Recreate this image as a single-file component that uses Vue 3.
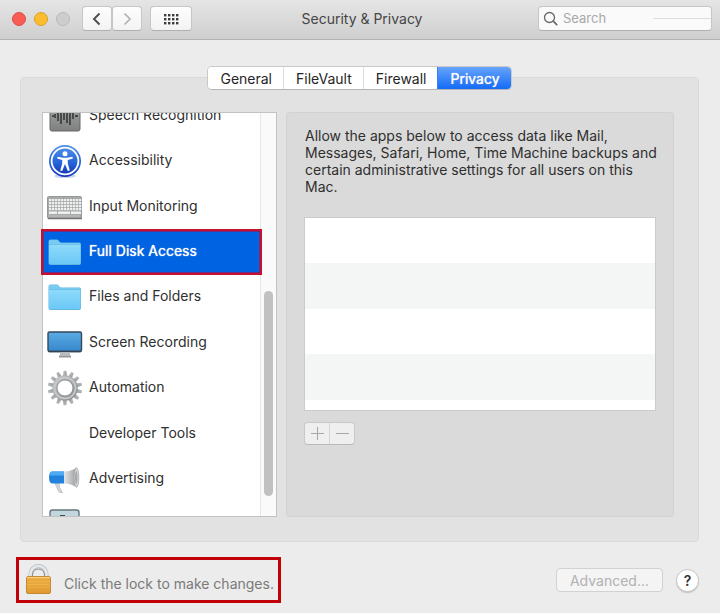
<script setup>
import { ref } from 'vue'

const tabs = ['General', 'FileVault', 'Firewall', 'Privacy']
const activeTab = ref('Privacy')

const categories = [
  { name: 'Speech Recognition', icon: 'speech' },
  { name: 'Accessibility', icon: 'accessibility' },
  { name: 'Input Monitoring', icon: 'keyboard' },
  { name: 'Full Disk Access', icon: 'folder' },
  { name: 'Files and Folders', icon: 'folder' },
  { name: 'Screen Recording', icon: 'screen' },
  { name: 'Automation', icon: 'gear' },
  { name: 'Developer Tools', icon: '' },
  { name: 'Advertising', icon: 'megaphone' },
  { name: '', icon: 'chart' },
]
const selected = ref('Full Disk Access')
const search = ref('')

const teeth = Array.from({ length: 14 }, (_, i) => (i * 360) / 14)
const keyRows = [9, 12, 15, 18]
const keyCols = Array.from({ length: 11 }, (_, i) => 2 + i * 3)
const dots = [0, 1, 2].flatMap((r) => [0, 1, 2, 3].map((c) => ({ x: 1 + c * 4, y: 1 + r * 4 })))
</script>

<template>
  <div class="window">
    <header class="titlebar">
      <div class="tools">
        <div class="lights">
          <button class="light red" aria-label="Close"></button>
          <button class="light yellow" aria-label="Minimize"></button>
          <button class="light off" aria-label="Zoom" disabled></button>
        </div>
        <div class="nav">
          <button class="tool" aria-label="Back">
            <svg width="10" height="14" viewBox="0 0 10 14"><path d="M7.500 1.500 2 7l5.500 5.500" fill="none" stroke="#4c4c4c" stroke-width="1.900" /></svg>
          </button>
          <button class="tool" aria-label="Forward" disabled>
            <svg width="10" height="14" viewBox="0 0 10 14"><path d="M2.500 1.500 8 7l-5.500 5.500" fill="none" stroke="#b2b2b2" stroke-width="1.700" /></svg>
          </button>
        </div>
        <button class="tool wide" aria-label="Show All">
          <svg width="16" height="12" viewBox="0 0 16 12">
            <rect v-for="(d, i) in dots" :key="i" :x="d.x" :y="d.y" width="2.400" height="2.400" fill="#3c3c3c" />
          </svg>
        </button>
      </div>
      <h1 class="title">Security &amp; Privacy</h1>
      <label class="search">
        <svg width="16" height="16" viewBox="0 0 16 16"><circle cx="6.500" cy="6.500" r="5" fill="none" stroke="#686868" stroke-width="1.300" /><path d="m10.200 10.200 4 4" stroke="#686868" stroke-width="1.700" /></svg>
        <input v-model="search" type="text" placeholder="Search" aria-label="Search" />
        <span class="rule"></span>
      </label>
    </header>

    <main class="body">
      <div class="tabs" role="tablist">
        <button
          v-for="tab in tabs"
          :key="tab"
          class="tab"
          :class="{ active: tab === activeTab }"
          role="tab"
          :aria-selected="tab === activeTab"
          @click="activeTab = tab"
        >{{ tab }}</button>
      </div>

      <section class="panel">
        <div class="sidebar">
          <div class="viewport">
            <ul class="list">
              <li v-for="item in categories" :key="item.name" class="entry">
                <button class="row" :class="{ selected: item.name === selected }" :aria-label="item.name || 'Analytics'" @click="selected = item.name">
                  <svg class="icon" width="36" height="36" viewBox="0 0 36 36" aria-hidden="true">
                    <defs>
                      <linearGradient id="metal" x1="0" y1="0" x2="0" y2="1"><stop offset="0" stop-color="#a9abab" /><stop offset="1" stop-color="#7e807f" /></linearGradient>
                      <linearGradient id="blue" x1="0" y1="0" x2="0" y2="1"><stop offset="0" stop-color="#4c8fe8" /><stop offset="0.600" stop-color="#2461d8" /><stop offset="1" stop-color="#1736b8" /></linearGradient>
                      <linearGradient id="sky" x1="0" y1="0" x2="0" y2="1"><stop offset="0" stop-color="#8edafb" /><stop offset="1" stop-color="#6bc8f6" /></linearGradient>
                      <linearGradient id="monitor" x1="0" y1="0" x2="0" y2="1"><stop offset="0" stop-color="#5cabe4" /><stop offset="1" stop-color="#3687cd" /></linearGradient>
                      <linearGradient id="steel" x1="0" y1="0" x2="1" y2="1"><stop offset="0" stop-color="#c0c3c5" /><stop offset="0.500" stop-color="#a8abad" /><stop offset="1" stop-color="#8c8e90" /></linearGradient>
                      <linearGradient id="horn" x1="0" y1="0" x2="1" y2="0"><stop offset="0" stop-color="#e3e5e6" /><stop offset="0.600" stop-color="#b8babc" /><stop offset="1" stop-color="#949597" /></linearGradient>
                    </defs>
                    <g v-if="item.icon === 'speech'">
                      <rect x="3" y="3" width="30" height="30" rx="2" fill="url(#metal)" stroke="#646665" />
                      <path d="M5 18h2m22 0h2M8 16v4m3-7v10m3-13v16m3-12v8m3-11v14m3-16v18m3-12v6m3-4v2" stroke="#303332" stroke-width="1.500" />
                    </g>
                    <g v-else-if="item.icon === 'accessibility'">
                      <ellipse cx="18" cy="33" rx="11" ry="2" fill="#a9b9e8" opacity="0.600" />
                      <circle cx="18" cy="18" r="16" fill="url(#blue)" />
                      <circle cx="18" cy="18" r="13.400" fill="url(#blue)" stroke="#fff" stroke-width="1.800" />
                      <circle cx="18" cy="10.800" r="2.500" fill="#fff" />
                      <path d="m10.500 13.800 5.500 1h4l5.500-1 .3 1.700-5 1.400v3.500l2 7-2 .6-2.800-7-2.800 7-2-.6 2-7v-3.500l-5-1.400z" fill="#fff" />
                    </g>
                    <g v-else-if="item.icon === 'keyboard'">
                      <rect x="0.500" y="7.500" width="34" height="22" rx="1" fill="#a8aaaa" stroke="#969898" />
                      <path d="M1 29.500h34" stroke="#747676" stroke-width="1.500" />
                      <template v-for="y in keyRows" :key="y">
                        <rect v-for="x in keyCols" :key="x" :x="x" :y="y + 1" width="2.300" height="2.200" fill="#eeefef" />
                      </template>
                      <path d="M2 23.800h8m1 0h12m1 0h10" stroke="#eeefef" stroke-width="2.400" />
                      <path d="M2 27h31" stroke="#c3c5c5" />
                    </g>
                    <g v-else-if="item.icon === 'folder'">
                      <path d="M1.500 7.500q0-2 2-2h7l3 3h19q1.500 0 1.500 1.500v19q0 2-2 2H3.500q-2 0-2-2z" fill="#62b5df" />
                      <path d="M2 7.500q0-1.500 1.500-1.500h7l3 3h18.500q1.500 0 1.500 1.500H2z" fill="#79cbef" />
                      <path d="M2 11h31.500v17.500q0 1.500-1.500 1.500H3.500q-1.500 0-1.500-1.500z" fill="url(#sky)" />
                    </g>
                    <g v-else-if="item.icon === 'screen'">
                      <rect x="1" y="7" width="33.500" height="19.500" rx="1.500" fill="url(#monitor)" stroke="#34495b" stroke-width="1.400" />
                      <path d="M1.500 26.500h32.500" stroke="#344351" stroke-width="1.400" />
                      <path d="M13 27.200h10v3.300H13z" fill="#b9bcbe" />
                      <path d="M12 31.500h12" stroke="#94979a" stroke-width="2" />
                    </g>
                    <g v-else-if="item.icon === 'gear'">
                      <path v-for="a in teeth" :key="a" d="M15.800 7.500 16.600 0.800h2.800l.8 6.700z" fill="url(#steel)" :transform="`rotate(${a} 18 18)`" />
                      <circle cx="18" cy="18" r="10.200" fill="none" stroke="url(#steel)" stroke-width="5" />
                      <circle cx="18" cy="18" r="8" fill="none" stroke="#8e9193" stroke-width="0.800" />
                      <circle cx="18" cy="18" r="10.500" fill="none" stroke="#c9cccd" stroke-width="1.500" />
                    </g>
                    <g v-else-if="item.icon === 'megaphone'">
                      <path d="m8 22 3 7.500q1 3 4.500 2l-3-5-.5-4.500z" fill="#d5d7d9" stroke="#b5b7b9" stroke-width="0.700" />
                      <path d="M5 10.500h12v12H5Q2 22 2 16.500t3-6z" fill="#2383dc" />
                      <path d="M5 10.500h12v4H2.300q.4-3.500 2.700-4z" fill="#50aaf1" />
                      <path d="M17 10.500q7 0 13-4v20q-6-4-13-4z" fill="url(#horn)" />
                      <ellipse cx="29.500" cy="16.500" rx="2.300" ry="9.700" fill="#d8dadb" stroke="#a5a6a8" stroke-width="0.800" />
                      <ellipse cx="29.300" cy="16.500" rx="1.200" ry="6.500" fill="#a5a6a8" />
                    </g>
                    <g v-else-if="item.icon === 'chart'">
                      <rect x="3" y="4" width="29" height="29" rx="2.500" fill="#c2d6df" stroke="#68747b" stroke-width="1.400" />
                      <path d="M13 9.800h5" stroke="#3c454b" stroke-width="1.500" />
                    </g>
                  </svg>
                  <span>{{ item.name }}</span>
                </button>
              </li>
            </ul>
          </div>
          <div class="track"><div class="thumb"></div></div>
          <div class="marker"></div>
        </div>

        <div class="detail">
          <p class="hint">Allow the apps below to access data like Mail, Messages, Safari, Home, Time Machine backups and certain administrative settings for all users on this Mac.</p>
          <div class="apps"></div>
          <div class="stepper">
            <button aria-label="Add" disabled><svg width="13" height="13" viewBox="0 0 13 13"><path d="M0 6.500h13M6.500 0v13" stroke="#a7a7a7" /></svg></button>
            <button aria-label="Remove" disabled><svg width="13" height="13" viewBox="0 0 13 13"><path d="M0 6.500h13" stroke="#a7a7a7" /></svg></button>
          </div>
        </div>
      </section>

      <footer class="footer">
        <button class="lock">
          <svg width="28" height="32" viewBox="0 0 28 32" aria-hidden="true">
            <defs>
              <linearGradient id="gold" x1="0" y1="0" x2="0" y2="1"><stop offset="0" stop-color="#efb040" /><stop offset="0.500" stop-color="#f3b247" /><stop offset="1" stop-color="#e0952b" /></linearGradient>
            </defs>
            <path d="M5.500 13V10a8 8 0 0 1 16 0V13" fill="none" stroke="#b4b8bb" stroke-width="4" />
            <path d="M5.500 13V10a8 8 0 0 1 16 0V13" fill="none" stroke="#e6e9eb" stroke-width="2.600" />
            <path d="M7.600 13V10a6 6 0 0 1 11.800 0V13" fill="none" stroke="#85898c" stroke-width="1" />
            <rect x="1.500" y="12.500" width="24" height="17" rx="1.500" fill="url(#gold)" stroke="#c58a34" />
            <path d="M2 16h23M2 19h23M2 22h23M2 25h23" stroke="#d79a38" stroke-width="0.800" />
            <path d="M2 13.500h23" stroke="#f8d081" />
          </svg>
          <span>Click the lock to make changes.</span>
        </button>
        <div class="actions">
          <button class="advanced" disabled>Advanced...</button>
          <button class="help" aria-label="Help">?</button>
        </div>
      </footer>
    </main>
  </div>
</template>

<style>
body {
  background: #ececec;
}
</style>

<style scoped>
.window {
  display: flex;
  flex-direction: column;
  min-height: 100vh;
  background: #ececec;
  color: #2f2f2f;
  font: 14px/17px Inter, "Liberation Sans", sans-serif;
}
.window *,
.window {
  box-sizing: border-box;
}
button,
input {
  margin: 0;
  padding: 0;
  border: 0;
  font: inherit;
  color: inherit;
}
.titlebar {
  display: grid;
  grid-template-columns: 1fr auto 1fr;
  align-items: center;
  height: 40px;
  padding: 0 8px 2px 12px;
  background: linear-gradient(#e5e5e5, #cfcfcf);
  border-bottom: 1px solid #b2b2b2;
}
.tools,
.lights,
.nav {
  display: flex;
  align-items: center;
}
.lights {
  gap: 8px;
  margin-right: 12px;
}
.light {
  width: 14px;
  height: 14px;
  border: 1px solid #df4a43;
  border-radius: 50%;
  background: #f95c54;
}
.light.yellow {
  border-color: #dfa023;
  background: #fbbd2e;
}
.light.off {
  border-color: #b9b9bb;
  background: #cdcdcf;
}
.nav {
  margin-right: 8px;
}
.tool {
  display: flex;
  align-items: center;
  justify-content: center;
  width: 30px;
  height: 25px;
  border: 1px solid #c6c6c6;
  border-bottom-color: #b0b0b0;
  border-radius: 4px;
  background: linear-gradient(#fdfdfd, #f3f3f3);
}
.tool.wide {
  width: 42px;
}
.title {
  margin: 0;
  font-size: 14px;
  font-weight: 400;
  color: #454545;
}
.search {
  display: flex;
  align-items: center;
  justify-self: end;
  gap: 4px;
  width: 174px;
  height: 25px;
  padding-left: 4px;
  border: 1px solid #c6c6c6;
  border-bottom-color: #b0b0b0;
  border-radius: 4px;
  background: #fafafa;
}
.search input {
  flex: 1;
  min-width: 0;
  background: transparent;
  outline: 0;
  font-size: 13px;
}
.search input::placeholder {
  color: #a8a8a8;
  opacity: 1;
}
.rule {
  width: 58px;
  height: 1px;
  background: #dedede;
}
.body {
  display: flex;
  flex: 1;
  flex-direction: column;
  padding: 26px 21px 10px 20px;
}
.tabs {
  position: relative;
  display: flex;
  align-self: center;
  margin-bottom: -13px;
  border: 1px solid #c9c9c9;
  border-bottom-color: #b5b5b5;
  border-radius: 5px;
  background: #fff;
  overflow: hidden;
}
.tab {
  height: 22px;
  padding: 0 11px 0 12px;
  background: #fff;
  color: #262626;
}
.tab + .tab {
  border-left: 1px solid #dedede;
}
.tab.active {
  border-color: #347ff6;
  background: linear-gradient(#66a3fb, #146bf6);
  color: #fff;
  text-shadow: 0 0 1px #fff;
}
.panel {
  display: grid;
  flex: 1;
  grid-template-columns: 235px 1fr;
  gap: 9px;
  padding: 34px 24px 24px 21px;
  border: 1px solid #dadada;
  border-radius: 4px;
  background: #e2e2e2;
}
.sidebar {
  position: relative;
  display: flex;
  height: 405px;
  border: 1px solid #c2c2c2;
  background: #fff;
}
.viewport {
  flex: 1;
  overflow: hidden;
}
.list {
  display: flex;
  flex-direction: column;
  height: 454px;
  margin: -20px 0 0;
  padding: 0;
  list-style: none;
}
.entry {
  display: flex;
  flex: 1;
  min-height: 0;
}
.row {
  display: flex;
  flex: 1;
  align-items: center;
  gap: 6px;
  padding-left: 4px;
  background: transparent;
  text-align: left;
}
.row span {
  padding-bottom: 3px;
}
.row.selected {
  background: #0063e1;
  color: #fff;
  text-shadow: 0 0 1px #fff;
}
.icon {
  flex: none;
}
.track {
  display: flex;
  align-items: flex-end;
  width: 16px;
  padding: 0 3px 20px;
  border-left: 1px solid #e6e6e6;
  background: #fafafa;
}
.thumb {
  width: 9px;
  height: 205px;
  border-radius: 5px;
  background: #c1c1c1;
}
.marker {
  position: absolute;
  top: 116px;
  left: -2px;
  width: 221px;
  height: 46px;
  border: 2px solid #c6102c;
  box-shadow: inset 0 0 0 1px #6a2f88;
  pointer-events: none;
}
.detail {
  height: 405px;
  padding: 14px 17px 20px;
  border: 1px solid #d2d2d2;
  border-radius: 3px;
  background: #dadada;
}
.hint {
  margin: 0 -8px 22px 0;
  padding-left: 1px;
}
.apps {
  height: 194px;
  border: 1px solid #cbcbcb;
  background: repeating-linear-gradient(#fff 0 45px, #f4f5f5 45px 91px);
}
.stepper {
  display: flex;
  width: 51px;
  margin-top: 11px;
  border: 1px solid #c8c8c8;
  border-bottom-color: #bababa;
  border-radius: 4px;
  background: #efefef;
}
.stepper button {
  display: flex;
  flex: 1;
  align-items: center;
  justify-content: center;
  height: 21px;
  background: transparent;
}
.stepper button + button {
  border-left: 1px solid #d4d4d4;
}
.footer {
  display: flex;
  align-items: center;
  justify-content: space-between;
  margin: 15px 0 0 -4px;
}
.lock {
  display: flex;
  align-items: center;
  gap: 11px;
  height: 46px;
  padding: 0 4px 0 6px;
  border: 3px solid #c20008;
  background: transparent;
  color: #7a7a7a;
}
.lock span {
  padding-top: 6px;
}
.actions {
  display: flex;
  align-items: center;
  gap: 13px;
}
.advanced {
  width: 107px;
  height: 24px;
  border: 1px solid #d2d2d2;
  border-radius: 4px;
  background: #f4f4f4;
  color: #b1b1b1;
}
.help {
  width: 23px;
  height: 23px;
  border: 1px solid #c6c6c6;
  border-radius: 50%;
  background: #fff;
  font-weight: 600;
  color: #333;
  box-shadow: 0 1px 1px #c8c8c8;
}
</style>
